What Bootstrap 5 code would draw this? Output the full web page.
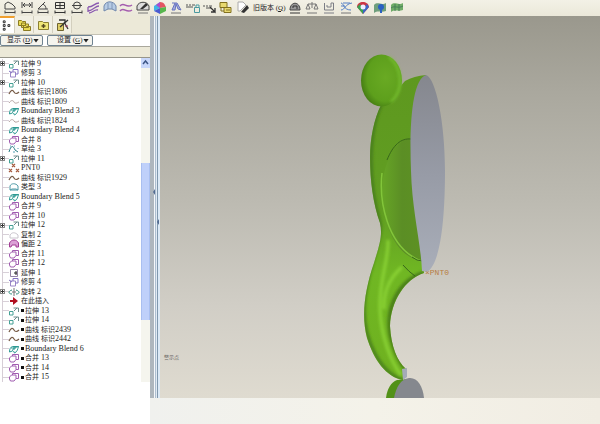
<!DOCTYPE html>
<html lang="zh-CN">
<head>
<meta charset="utf-8">
<meta name="viewport" content="width=device-width, initial-scale=1">
<title>Model Tree</title>
<link href="https://cdn.jsdelivr.net/npm/bootstrap@5.3.0/dist/css/bootstrap.min.css" rel="stylesheet">
<style>
body{font-family:"Liberation Serif","Noto Sans CJK SC",serif;font-size:7px;line-height:1;color:#222;background:#fff}
button{border:0;background:none;padding:0;color:inherit;font:inherit}
svg{display:block}
.toolbar{height:16px;background:linear-gradient(#f3f1e6,#ebe8d9);padding-left:2px}
.toolbar svg{width:16px;height:14px}
.tools-main{width:249px}
.tools-extra{width:118px}
.version{width:36px;white-space:nowrap;text-align:left;padding-left:2px}
.side{width:150px;background:#fff}
.chrome{background:#ece9d8}
.tab{width:19px;height:17px;display:flex;align-items:center;justify-content:center;border-right:1px solid #d3cfbe;background:#f1efe3}
.tab.on{width:15px;background:#fff;border-top:2px solid #f0a030}
.tab svg{width:15px;height:14px}
.menus{height:13px;background:#fff;border-bottom:1px solid #aaa89c;border-top:1px solid #c5c2b4}
.menu{border:1px solid #6f8391;border-radius:2px;background:#f5f4ee;height:11px;width:43px;padding:0 3px 0 6px;display:flex;align-items:center;justify-content:space-between;white-space:nowrap}
.menu.wide{width:46px;padding-left:9px}
.caret{width:6px;height:4px;background:#222;clip-path:polygon(0 0,100% 0,50% 100%)}
.edge{height:1px}
.strip{height:11px;border-bottom:1px solid #98968a}
.tree{margin:0;padding:1px 0 0;list-style:none;overflow:hidden}
.tree li{flex:1 1 0;min-height:0;display:flex;align-items:center;white-space:nowrap;background:linear-gradient(#d6ced6,#d6ced6) 2px 0/1px 100% no-repeat,linear-gradient(#d8d0d8,#d8d0d8) 3px 50%/6px 1px no-repeat}
.tree .icon{width:12px;height:10px;margin-right:1px;flex:none;fill:none}
.fold{width:8px;flex:none}
.fold button{display:block;width:5px;height:5px;border:1px solid #888;background:linear-gradient(#333,#333) center/3px 1px no-repeat,linear-gradient(#333,#333) center/1px 3px no-repeat,#fff}
.latin{font-size:8px;white-space:pre}
.dot{width:3px;height:3px;background:#111;margin-right:1px;flex:none}
.scroll{width:9px;background:#f5f5ee}
.scroll .up{height:10px;background:#c9d8fb}
.scroll .above{flex:95}
.scroll .thumb{flex:158;background:#bfd0fa;border:1px solid #a9bff0;border-width:0 1px}
.scroll .under{flex:62}
.splitter{width:10px;background:linear-gradient(90deg,#aeb6bd 0 4px,#f4f7fa 4px 5px,#aebfd0 5px 6px,#e1eaf3 6px 7px,#7f97ad 7px 8px,#dce9f5 8px 10px)}
.view{background:linear-gradient(#9a988d,#aaa89e 20%,#bcbab1 48%,#d1cec6 76%,#dfdbd0)}
.view svg{width:100%;height:100%}
.foot{height:26px;background:linear-gradient(90deg,#f0f1ee,#f4f2e9 50%,#f1ede3)}
.below{height:42px}
</style>
<script src="https://cdn.jsdelivr.net/npm/bootstrap@5.3.0/dist/js/bootstrap.bundle.min.js"></script>
</head>
<body class="d-flex flex-column vh-100 overflow-hidden">
<svg width="0" height="0" class="position-absolute" aria-hidden="true">
  <symbol id="extrude" viewBox="0 0 12 10"><path d="M1.500 5.500h3.500v3.500h-3.500z" stroke="#45a095"/><path d="M5.500 2h5v4M6 5l3-3" stroke="#6c8c8c"/></symbol>
  <symbol id="trim" viewBox="0 0 12 10"><path d="M2.500 4h5v5h-5z" stroke="#9a86c6"/><path d="M5 4V1.500h5V6H7.500M1 3l3 2" stroke="#8473c4"/></symbol>
  <symbol id="curve" viewBox="0 0 12 10"><path d="M1 7C3 2 5 3 6 5s3 2 5 0" stroke="#765a45" stroke-width="1.200"/></symbol>
  <symbol id="curvelight" viewBox="0 0 12 10"><path d="M1 6C3 3 5 3 6 5s3 1 5 0" stroke="#b5a3a0"/></symbol>
  <symbol id="blend" viewBox="0 0 12 10"><path d="M1.500 8c0-3 1-5 3-5.500h6M1.500 8l3-1c0-2 1-3 6-4.500-1 3-1 5-4 6.500l-1-2M3 4h5M6 2v4" stroke="#2c9992"/></symbol>
  <symbol id="merge" viewBox="0 0 12 10"><path d="M4.500 3V1.500h6v5H8M1.500 5l2-2H8v3.500L6 9H2.500L1.500 7z" stroke="#a05cb0"/></symbol>
  <symbol id="sketch" viewBox="0 0 12 10"><path d="M1 8c2-7 4-7 6-2l3 2" stroke="#287d84"/><path d="M2 2h1M6 2h1M10 4v1M5 8h2" stroke="#51a0b4"/></symbol>
  <symbol id="point" viewBox="0 0 12 10"><path d="m1 6 3 3m0-3-3 3M4 1l3 3m0-3L4 4m4 2 3 3m0-3-3 3" stroke="#a65b3f" stroke-width="1.200"/></symbol>
  <symbol id="style" viewBox="0 0 12 10"><path d="M2 8V4c1-3 6-3 8 0v4zM2 8l2-1h4l2 1" stroke="#4e9aa7"/></symbol>
  <symbol id="copy" viewBox="0 0 12 10"><path d="M2 8V5c2-3 5-3 8 0v3z" stroke="#c9c4cc"/></symbol>
  <symbol id="offset" viewBox="0 0 12 10"><path d="M1.500 8V4c2-4 7-4 9 0v4H8V6H4l-1 2z" fill="#dba0d6" stroke="#a33c95"/></symbol>
  <symbol id="extend" viewBox="0 0 12 10"><path d="M2.500 1.500h7v7h-7z" stroke="#9484a5"/><path d="M6 5h3M8 3v4" stroke="#222"/></symbol>
  <symbol id="revolve" viewBox="0 0 12 10"><path d="M4 3C0 4 0 7 4 7m4-4c4 1 4 4 0 4" stroke="#2f8c7b"/><path d="M6 1v8M4 5h4" stroke="#777"/></symbol>
  <symbol id="insert" viewBox="0 0 12 10"><path d="M2 4h3V1l5 4-5 4V6H2z" fill="#b01020"/></symbol>
</svg>

<header class="toolbar d-flex align-items-center flex-shrink-0" role="toolbar">
  <div class="tools-main d-flex justify-content-between">
    <button aria-label="Body"><svg viewBox="0 0 16 14" fill="none" stroke="#444"><path d="M3 6V3l3-2 4 2 3 3v2H3zM3 11.500h10M3 9.500v3M13 9.500v3"/></svg></button>
    <button aria-label="Distance"><svg viewBox="0 0 16 14" fill="none" stroke="#444"><path d="M3 1v6M13 1v6M4 4h8M6 2 4 4l2 2M10 2l2 2-2 2M3 11.500h10M3 9.500v3M13 9.500v3"/></svg></button>
    <button aria-label="Angle"><svg viewBox="0 0 16 14" fill="none" stroke="#444"><path d="M10 1 3 8h10M8 3c2 1 3 3 3 5M3 11.500h10M3 9.500v3M13 9.500v3"/></svg></button>
    <button aria-label="Area"><svg viewBox="0 0 16 14" fill="none" stroke="#333"><path d="M3.500 1.500h9v6h-9zM3 4.500h10M8 1v7M3 11.500h10M3 9.500v3M13 9.500v3"/></svg></button>
    <button aria-label="Diameter"><svg viewBox="0 0 16 14" fill="none" stroke="#444"><circle cx="8" cy="4.500" r="3.500"/><path d="M3 4.500h10M3 11.500h10M3 9.500v3M13 9.500v3"/></svg></button>
    <button aria-label="Curvature"><svg viewBox="0 0 16 14" fill="none" stroke="#8b5ab0" stroke-width="1.300"><path d="M14 2C9 2 9 6 3 6M14 5c-4 0-5 4-11 5M13 9c-4-1-5 3-9 3M3 6v5"/></svg></button>
    <button aria-label="Section"><svg viewBox="0 0 16 14"><path d="M2 10V5c2-6 10-5 12 0v5l-4-2H6z" fill="#b7cce5" stroke="#7188ac"/><path d="M6 2v6M10 2v6" stroke="#8097b8"/></svg></button>
    <button aria-label="Waves"><svg viewBox="0 0 16 14" fill="none" stroke="#a45cae" stroke-width="1.500"><path d="M2 5c4-5 6 3 12-1M2 10c4-5 6 3 12-1"/></svg></button>
    <button aria-label="Reflection"><svg viewBox="0 0 16 14"><path d="M2 9V5c2-5 10-5 12 0v4z" fill="#ddd" stroke="#444"/><path d="m5 8 6-6 2 2-5 4z" fill="#333"/><path d="M3 12h10" stroke="#777"/></svg></button>
    <button aria-label="Shaded curvature"><svg viewBox="0 0 16 14"><path d="M2 10V5l6-4v6z" fill="#42b6e5"/><path d="M8 1c4 0 5 3 6 5L8 7z" fill="#e45562"/><path d="m2 10 6-3v6z" fill="#4a5bd0"/><path d="m8 7 6-1v4l-6 3z" fill="#57b64c"/><path d="M4 4l4-3v6z" fill="#b449c8"/></svg></button>
    <button aria-label="Draft"><svg viewBox="0 0 16 14" fill="none" stroke="#6672c0"><path d="M4 2h5l4 7-3-1-2-5-1 6H4l3-7" fill="#a8afe0"/><path d="M3 12h10" stroke="#777"/></svg></button>
    <button aria-label="Datum"><svg viewBox="0 0 16 14" fill="none"><path d="M1 4h2M4 4h2M7 4h3M1 6h7" stroke="#555"/><path d="M9.500 6.500h5v5h-5zM11 6V4h3v2" stroke="#4b9aa0"/></svg></button>
    <button aria-label="Select datum"><svg viewBox="0 0 16 14" fill="none"><path d="M1 5h2M4 5h2M4 7h5M7 5h3" stroke="#555"/><path d="m8 6 5 5V7m0 4H9" stroke="#333" stroke-width="1.300"/></svg></button>
    <button aria-label="Layers"><svg viewBox="0 0 16 14" fill="#e8d970" stroke="#82711f"><path d="M2 1.500h7v5H2zM6 6.500h7v5H6z"/><path d="M8 9h4M3 7v3h3" fill="none"/></svg></button>
    <button aria-label="Edit"><svg viewBox="0 0 16 14"><path d="M3 1h5l3 3-6 6H3z" fill="#fff" stroke="#aaa"/><path d="m6 11 6-7 2 3-5 5z" fill="#333"/></svg></button>
  </div>
  <button class="version">旧版本 (<u>Q</u>)</button>
  <div class="tools-extra d-flex justify-content-between">
    <button aria-label="Mass"><svg viewBox="0 0 16 14"><path d="M3 9c0-9 10-9 10 0z" fill="#999" stroke="#444"/><path d="M6 7V5h4v3M3 12h10" stroke="#333" fill="none"/></svg></button>
    <button aria-label="Balance"><svg viewBox="0 0 16 14" fill="none" stroke="#777"><path d="M4 3h8M8 1v6M4 3 2 8h4zM12 3l-2 5h4zM3 12h10"/></svg></button>
    <button aria-label="Clearance"><svg viewBox="0 0 16 14" fill="none" stroke="#7c7e86"><path d="M3.500 2v7h9V2H10v4H6V4M3 12h10"/></svg></button>
    <button aria-label="Graph"><svg viewBox="0 0 16 14" fill="none" stroke="#537ec5"><path d="M3 2c3 0 2 7 10 7M3 9c4 0 4-6 11-7M5 2h7M3 5h4"/><path d="M3 12h10" stroke="#777"/></svg></button>
    <button aria-label="Check"><svg viewBox="0 0 16 14"><path d="M2 6c0-6 11-7 12 0l-6 7z" fill="#cc3544"/><path d="M8 13 2 6l3-3 3 5z" fill="#3aa353"/><path d="m8 13 6-7-2-3-4 5z" fill="#3a65c4"/><circle cx="8" cy="6" r="2.500" fill="#eef"/></svg></button>
    <button aria-label="Surface point"><svg viewBox="0 0 16 14"><path d="M2 4c4-4 7 1 12-2v8c-5 2-8-1-12 2z" fill="#6f9f7c"/><circle cx="9" cy="6" r="3" fill="#2b61c2"/><path d="M9 8v4" stroke="#2b61c2" stroke-width="2"/></svg></button>
    <button aria-label="Surface"><svg viewBox="0 0 16 14"><path d="M2 4c4-4 7 1 12-2v7c-5 2-8-1-12 2z" fill="#70ac68"/><path d="M2 7c4-3 7 1 12-2M6 3v7M10 3v7" stroke="#477f57" fill="none"/></svg></button>
  </div>
</header>

<div class="d-flex flex-fill overflow-hidden">
  <aside class="side d-flex flex-column flex-shrink-0">
    <div class="chrome d-flex" role="tablist">
      <button class="tab on" role="tab" aria-selected="true" aria-label="Model tree"><svg viewBox="0 0 15 14" fill="none" stroke="#222"><path d="M3.500 1.500h2v2h-2zM3.500 5.500h2v2h-2zM3.500 9.500h2v2h-2zM8.500 5.500h2v2h-2z"/></svg></button>
      <button class="tab" role="tab" aria-label="Folders"><svg viewBox="0 0 15 14" fill="#eadb55" stroke="#8c7c22"><path d="M1.500 2.500h3l1 1h3v4h-7zM4.500 5h3l1 1h3v3.500h-7zM6.500 7.500h2l1 1h4v4h-7z"/></svg></button>
      <button class="tab" role="tab" aria-label="Favorites"><svg viewBox="0 0 15 14"><path d="M2.500 3.500h4l1 1h5v7h-10z" fill="#f0e777" stroke="#8c8032"/><path d="M7.500 6v4M5.500 8h4" stroke="#554920" stroke-width="1.500"/></svg></button>
      <button class="tab" role="tab" aria-label="Tools"><svg viewBox="0 0 15 14"><path d="M2.500 5.500h6v7h-6z" fill="#dfcf67" stroke="#6e6330"/><path d="M4 2h6v4M5 9l8-7M9 4l4 7" stroke="#333" stroke-width="1.300" fill="none"/><path d="M10 8h3" stroke="#a03a5e"/></svg></button>
    </div>
    <div class="chrome edge"></div>
    <div class="menus d-flex gap-1">
      <button class="menu"><span>显示 (<u>D</u>)</span><span class="caret"></span></button>
      <button class="menu wide"><span>设置 (<u>G</u>)</span><span class="caret"></span></button>
    </div>
    <div class="chrome strip"></div>
    <div class="d-flex flex-fill overflow-hidden">
      <ul class="tree d-flex flex-column flex-fill" id="tree"></ul>
      <div class="scroll d-flex flex-column flex-shrink-0">
        <button class="up" aria-label="Scroll up"><svg viewBox="0 0 9 10"><path d="m2 6 2.500-3L7 6" fill="none" stroke="#3d5687" stroke-width="1.500"/></svg></button>
        <div class="above"></div>
        <div class="thumb"></div>
        <div class="under"></div>
      </div>
    </div>
    <div class="below"></div>
  </aside>

  <div class="d-flex flex-column flex-fill">
    <main class="d-flex flex-fill overflow-hidden">
      <div class="splitter flex-shrink-0"><svg width="10" height="210" viewBox="0 0 10 210"><path d="M5 173v6l-2-3zM9 203v6l-2-3z" fill="#536b91"/></svg></div>
      <div class="view flex-fill">
        <svg viewBox="160 16 440 382" preserveAspectRatio="xMinYMin slice" role="img" aria-label="Model">
          <defs>
            <radialGradient id="head" cx=".6" cy=".45" r=".6"><stop offset="0" stop-color="#69aa23"/><stop offset=".75" stop-color="#5d9f1c"/><stop offset="1" stop-color="#477f14"/></radialGradient>
            <linearGradient id="body" x1="0" x2="0" y1="75" y2="380" gradientUnits="userSpaceOnUse"><stop offset="0" stop-color="#5e981f"/><stop offset=".45" stop-color="#619e22"/><stop offset=".65" stop-color="#70b723"/><stop offset="1" stop-color="#6fb120"/></linearGradient>
            <linearGradient id="cut" x1="0" x2="0" y1="0" y2="1"><stop offset="0" stop-color="#85878e"/><stop offset=".5" stop-color="#979ba6"/><stop offset="1" stop-color="#a9aeb9"/></linearGradient>
            <linearGradient id="inner" x1="0" x2="1"><stop offset="0" stop-color="#67a626"/><stop offset=".5" stop-color="#5b8e25"/><stop offset="1" stop-color="#5d9123"/></linearGradient>
            <filter id="soft" x="-50%" y="-20%" width="200%" height="140%"><feGaussianBlur stdDeviation="1.500"/></filter>
            <clipPath id="shape"><path id="outline" d="M381 105C391 104 398 88 405 81Q414 76 426 75L424 273C405 279 391 301 390 326C391 346 397 361 406 369L403 380C386 377 374 360 367 338C361 315 365 289 374 263C379 246 383 236 380 223C373 203 370 181 370 157C370 139 374 119 381 105Z"/></clipPath>
          </defs>
          <use href="#outline" fill="url(#body)"/>
          <g clip-path="url(#shape)">
            <path d="M411 139C395 138 382 165 382 193C382 222 395 257 422 261L413 190Z" fill="url(#inner)"/>
            <g fill="none" filter="url(#soft)">
              <path d="M381 105C369 130 367 180 380 223C383 240 364 275 364 310C364 340 380 373 403 380" stroke="#44791a" stroke-width="3"/>
              <path d="M424 273C398 281 385 309 391 337Q396 357 406 369" stroke="#477a18" stroke-width="4"/>
              <path d="M388 240C389 260 379 279 380 309C381 337 391 362 401 375M402 267C386 281 384 296 384 309" stroke="#8bd335" stroke-width="3"/>
            </g>
            <path d="M382 173C379 199 386 247 421 261" fill="none" stroke="#82c53a" stroke-width="1.500"/>
            <path d="M387 160C393 145 401 138 411 139M403 265Q409 272 415 276M412 257Q417 261 422 261" fill="none" stroke="#39671c"/>
          </g>
          <ellipse cx="381.500" cy="80.500" rx="20.500" ry="26" fill="url(#head)"/>
          <path d="M389 57Q399 65 400 79T391 102" fill="none" stroke="#7bc233" stroke-width="2" filter="url(#soft)"/>
          <path d="M426 75C436 78 445 123 445 171C445 228 439 265 427 272L422 271C421 244 412 210 411 171C409 120 413 79 426 75Z" fill="url(#cut)"/>
          <path d="M397 380C391 382 387 389 386 398H407L409 379Z" fill="#529118"/>
          <path d="M394 398C396 387 401 379 409 378S423 386 424 398Z" fill="#85888e"/>
          <path d="M402 369 407 368V377L403 380Z" fill="#a4abb7"/>
          <text x="425" y="275" font-size="8" fill="#b87d42" font-family="Liberation Mono,monospace">×PNT0</text>
          <text x="164" y="359" font-size="5" fill="#66635f" font-family="Noto Sans CJK SC,sans-serif">警示点</text>
        </svg>
      </div>
    </main>
    <footer class="foot flex-shrink-0"></footer>
  </div>
</div>

<script>
// icon, label, Latin suffix, flags: "+" has children, "*" not yet inserted
const rows = [
  ['extrude','拉伸',' 9','+'],['trim','修剪',' 3'],['extrude','拉伸',' 10','+'],['curve','曲线 标识','1806'],
  ['curvelight','曲线 标识','1809'],['blend','','Boundary Blend 3'],['curvelight','曲线 标识','1824'],
  ['blend','','Boundary Blend 4'],['merge','合并',' 8'],['sketch','草绘',' 3'],['extrude','拉伸',' 11','+'],
  ['point','','PNT0'],['curve','曲线 标识','1929'],['style','类型',' 3'],['blend','','Boundary Blend 5'],
  ['merge','合并',' 9'],['merge','合并',' 10'],['extrude','拉伸',' 12','+'],['copy','复制',' 2'],
  ['offset','偏距',' 2'],['merge','合并',' 11'],['merge','合并',' 12'],['extend','延伸',' 1'],['trim','修剪',' 4'],
  ['revolve','旋转',' 2','+'],['insert','在此插入',''],['extrude','拉伸',' 13','*'],['extrude','拉伸',' 14','*'],
  ['curve','曲线 标识','2439','*'],['curve','曲线 标识','2442','*'],['blend','','Boundary Blend 6','*'],
  ['merge','合并',' 13','*'],['merge','合并',' 14','*'],['merge','合并',' 15','*']
];
document.getElementById('tree').innerHTML = rows.map(([icon, name, latin, flag]) =>
  `<li><span class="fold">${flag === '+' ? '<button aria-label="Expand"></button>' : ''}</span>` +
  `<svg class="icon"><use href="#${icon}"/></svg>${flag === '*' ? '<span class="dot"></span>' : ''}` +
  `<span>${name.replace(' ', '<span class="latin"> </span>')}<span class="latin">${latin}</span></span></li>`).join('');
</script>
</body>
</html>
